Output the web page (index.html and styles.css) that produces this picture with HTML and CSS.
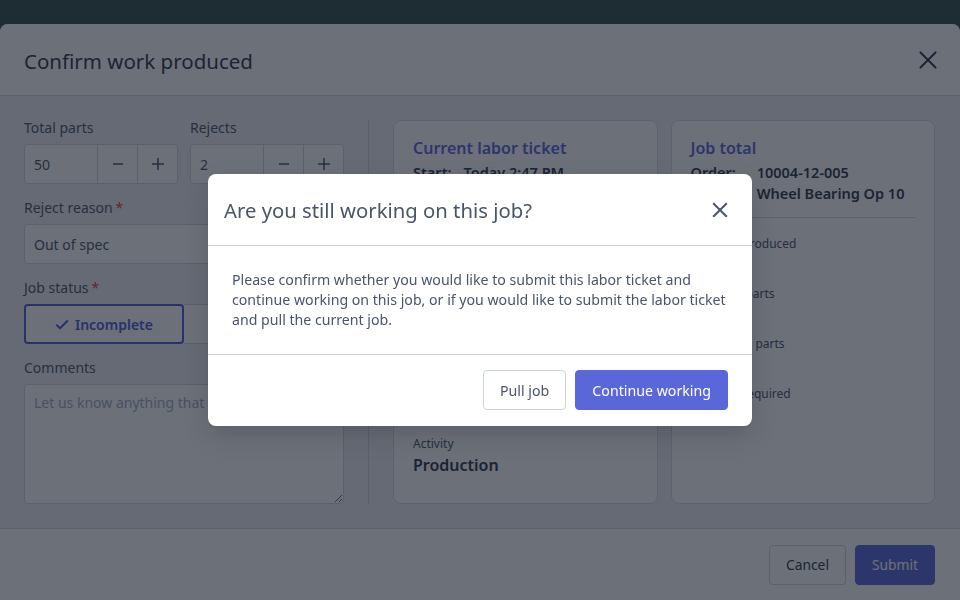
FILE: index.html
```html
<!DOCTYPE html>
<html lang="en">
<head>
<meta charset="utf-8">
<title>Confirm work produced</title>
<link rel="stylesheet" href="styles.css">
</head>
<body>
<div class="page">
  <div class="sheet">
    <div class="sheet-header">
      <h1 class="sheet-title">Confirm work produced</h1>
      <button class="icon-btn close-lg" aria-label="Close">
        <svg width="18" height="18" viewBox="0 0 18 18"><path d="M1.5 1.5L16.5 16.5M16.5 1.5L1.5 16.5" stroke="currentColor" stroke-width="2" stroke-linecap="round" fill="none"/></svg>
      </button>
    </div>
    <div class="sheet-body">
      <div class="form-col">
        <div class="row-2">
          <div class="field">
            <label class="label">Total parts</label>
            <div class="stepper">
              <input class="stepper-input" value="50">
              <button class="step-btn"><svg width="14" height="14" viewBox="0 0 14 14"><path d="M2 7H12" stroke="currentColor" stroke-width="1.5"/></svg></button>
              <button class="step-btn"><svg width="14" height="14" viewBox="0 0 14 14"><path d="M1 7H13M7 1V13" stroke="currentColor" stroke-width="1.5"/></svg></button>
            </div>
          </div>
          <div class="field">
            <label class="label">Rejects</label>
            <div class="stepper">
              <input class="stepper-input" value="2">
              <button class="step-btn"><svg width="14" height="14" viewBox="0 0 14 14"><path d="M2 7H12" stroke="currentColor" stroke-width="1.5"/></svg></button>
              <button class="step-btn"><svg width="14" height="14" viewBox="0 0 14 14"><path d="M1 7H13M7 1V13" stroke="currentColor" stroke-width="1.5"/></svg></button>
            </div>
          </div>
        </div>
        <div class="field">
          <label class="label">Reject reason<span class="req">*</span></label>
          <div class="select">
            <span>Out of spec</span>
            <svg width="14" height="14" viewBox="0 0 14 14"><path d="M3 5L7 9L11 5" stroke="currentColor" stroke-width="1.5" fill="none"/></svg>
          </div>
        </div>
        <div class="field">
          <label class="label">Job status<span class="req">*</span></label>
          <div class="toggle">
            <button class="toggle-btn active">
              <svg width="14" height="11" viewBox="0 0 14 11"><path d="M1.2 5.6L5 9.3L12.8 1.5" stroke="currentColor" stroke-width="2" fill="none"/></svg>
              Incomplete
            </button>
            <button class="toggle-btn">Complete</button>
          </div>
        </div>
        <div class="field">
          <label class="label">Comments</label>
          <textarea class="textarea" placeholder="Let us know anything that happened"></textarea>
        </div>
      </div>
      <div class="divider"></div>
      <div class="cards">
        <div class="card">
          <h2 class="card-title">Current labor ticket</h2>
          <dl class="meta meta-start">
            <dt>Start:</dt><dd>Today 2:47 PM</dd>
            <dt>End:</dt><dd>Today 4:12 PM</dd>
          </dl>
          <hr class="card-rule">
          <div class="stat"><span class="stat-label">Parts produced</span><span class="stat-value">50</span></div>
          <div class="stat"><span class="stat-label">Good parts</span><span class="stat-value">48</span></div>
          <div class="stat"><span class="stat-label">Rejected parts</span><span class="stat-value">2</span></div>
          <div class="stat"><span class="stat-label">Duration</span><span class="stat-value">1h 25m</span></div>
          <div class="stat"><span class="stat-label">Activity</span><span class="stat-value">Production</span></div>
        </div>
        <div class="card">
          <h2 class="card-title">Job total</h2>
          <dl class="meta">
            <dt>Order:</dt><dd>10004-12-005</dd>
            <dt>Router:</dt><dd>Wheel Bearing Op 10</dd>
          </dl>
          <hr class="card-rule">
          <div class="stat"><span class="stat-label">Quantity produced</span><span class="stat-value">150</span></div>
          <div class="stat"><span class="stat-label">Accepted parts</span><span class="stat-value">145</span></div>
          <div class="stat"><span class="stat-label">Completed parts</span><span class="stat-value">5</span></div>
          <div class="stat"><span class="stat-label">Quantity required</span><span class="stat-value">500</span></div>
        </div>
      </div>
    </div>
    <div class="sheet-footer">
      <button class="btn btn-secondary btn-sm">Cancel</button>
      <button class="btn btn-primary btn-sm">Submit</button>
    </div>
  </div>
</div>

<div class="overlay"></div>

<div class="dialog-layer">
  <div class="dialog" role="dialog">
    <div class="dialog-header">
      <h2 class="dialog-title">Are you still working on this job?</h2>
      <button class="icon-btn close-sm" aria-label="Close">
        <svg width="16" height="16" viewBox="0 0 16 16"><path d="M1.2 1.2L14.8 14.8M14.8 1.2L1.2 14.8" stroke="currentColor" stroke-width="2" fill="none"/></svg>
      </button>
    </div>
    <div class="dialog-body">
      <p>Please confirm whether you would like to submit this labor ticket and continue working on this job, or if you would like to submit the labor ticket and pull the current job.</p>
    </div>
    <div class="dialog-footer">
      <button class="btn btn-secondary btn-light">Pull job</button>
      <button class="btn btn-primary">Continue working</button>
    </div>
  </div>
</div>
</body>
</html>
```

FILE: styles.css
```css
* { box-sizing: border-box; }

html, body {
  margin: 0;
  padding: 0;
  width: 960px;
  height: 600px;
  overflow: hidden;
}

body {
  font-family: "Noto Sans", "Open Sans", sans-serif;
  background: #334f47;
  color: #2d3748;
}

button, input, textarea {
  font-family: inherit;
}

.page {
  padding-top: 24px;
  height: 600px;
}

.sheet {
  background: #edf0f4;
  border-radius: 8px 8px 0 0;
  height: 576px;
  display: flex;
  flex-direction: column;
  overflow: hidden;
}

.sheet-header {
  background: #ffffff;
  height: 72px;
  border-bottom: 1px solid #d2d8e0;
  display: flex;
  align-items: center;
  justify-content: space-between;
  padding: 2px 23px 0 24px;
}

.sheet-title {
  margin: 0;
  font-size: 20.5px;
  font-weight: 400;
  color: #2d3748;
}

.icon-btn {
  border: 0;
  background: transparent;
  padding: 0;
  display: flex;
  align-items: center;
  justify-content: center;
  color: #2d3748;
}

.close-lg { margin-top: -2px; }

.sheet-body {
  flex: 1;
  display: flex;
  padding: 24px 25px 24px 24px;
}

.form-col {
  width: 320px;
  display: flex;
  flex-direction: column;
  gap: 16px;
}

.row-2 {
  display: flex;
  gap: 12px;
}

.row-2 .field { flex: 1 1 0; min-width: 0; }

.field {
  display: flex;
  flex-direction: column;
}

.label {
  font-size: 14px;
  line-height: 16px;
  color: #4a5568;
  margin-bottom: 8px;
}

.req {
  color: #e53e3e;
  margin-left: 3px;
}

.stepper {
  display: flex;
  height: 40px;
  border: 1px solid #cfd6df;
  border-radius: 4px;
  background: #ffffff;
  overflow: hidden;
}

.stepper-input {
  flex: 1 1 0;
  min-width: 0;
  border: 0;
  padding: 0 0 0 9px;
  font-size: 14px;
  color: #4a5568;
  background: transparent;
}

.step-btn {
  flex: 0 0 40px;
  border: 0;
  border-left: 1px solid #cfd6df;
  background: transparent;
  color: #4a5568;
  display: flex;
  align-items: center;
  justify-content: center;
}

.select {
  height: 40px;
  border: 1px solid #cfd6df;
  border-radius: 4px;
  background: #ffffff;
  display: flex;
  align-items: center;
  justify-content: space-between;
  padding: 0 12px 0 9px;
  font-size: 14px;
  color: #4a5568;
}

.toggle {
  display: grid;
  grid-template-columns: 160px 160px;
  height: 40px;
}

.toggle-btn {
  min-width: 0;
  padding: 0;
  border: 1px solid #cfd6df;
  background: #ffffff;
  font-size: 14px;
  color: #4a5568;
  display: flex;
  align-items: center;
  justify-content: center;
  gap: 6px;
}

.toggle-btn:last-child {
  border-left: 0;
  border-radius: 0 4px 4px 0;
}

.toggle-btn.active {
  border: 2px solid #4f5bd5;
  border-radius: 4px;
  color: #4f5bd5;
  font-weight: 600;
}

.textarea {
  height: 120px;
  border: 1px solid #cfd6df;
  border-radius: 4px;
  background: #ffffff;
  padding: 8px 9px;
  font-size: 14px;
  line-height: 20px;
  color: #4a5568;
}

.textarea::placeholder { color: #a0aec0; }

.divider {
  width: 1px;
  background: #cfd6df;
  margin: 0 24px;
}

.cards {
  flex: 1;
  display: grid;
  grid-template-columns: 1fr 1fr;
  gap: 13px;
}

.card {
  background: #ffffff;
  border: 1px solid #d6dce4;
  border-radius: 8px;
  padding: 15px 19px;
  display: flex;
  flex-direction: column;
}

.card-title {
  margin: 0;
  font-size: 16px;
  line-height: 24px;
  font-weight: 600;
  color: #5a67d8;
}

.meta {
  margin: 2px 0 0;
  display: grid;
  grid-template-columns: auto 1fr;
  column-gap: 14px;
  font-size: 14.5px;
  line-height: 21px;
  font-weight: 600;
  color: #2d3748;
}

.meta-start { column-gap: 12px; }

.meta dt, .meta dd { margin: 0; }

.card-rule {
  border: 0;
  border-top: 1px solid #d6dce4;
  margin: 13px 0 17px;
  width: 100%;
}

.stat {
  display: flex;
  flex-direction: column;
  margin-bottom: 8px;
}

.stat-label {
  font-size: 12px;
  line-height: 18px;
  color: #4a5568;
}

.stat-value {
  font-size: 16px;
  line-height: 24px;
  font-weight: 600;
  color: #2d3748;
}

.sheet-footer {
  background: #ffffff;
  height: 72px;
  border-top: 1px solid #d2d8e0;
  display: flex;
  justify-content: flex-end;
  align-items: center;
  gap: 9px;
  padding: 0 25px;
}

.btn {
  height: 40px;
  border-radius: 4px;
  padding: 0 16px;
  font-size: 14.2px;
  display: flex;
  align-items: center;
}

.btn-sm { font-size: 13.8px; }

.btn-secondary {
  background: #ffffff;
  border: 1px solid #cfd6df;
  color: #2d3748;
}

.btn-primary {
  background: #5a67d8;
  border: 1px solid #5a67d8;
  color: #ffffff;
}

.overlay {
  position: fixed;
  inset: 0;
  background: rgba(17, 24, 39, 0.62);
}

.dialog-layer {
  position: fixed;
  inset: 0;
  display: flex;
  align-items: center;
  justify-content: center;
}

.dialog {
  width: 544px;
  background: #ffffff;
  border-radius: 8px;
  box-shadow: 0 10px 25px rgba(0, 0, 0, 0.15);
}

.dialog-header {
  height: 72px;
  border-bottom: 1px solid #cbd5e0;
  display: flex;
  align-items: center;
  justify-content: space-between;
  padding: 0 24px 0 16px;
}

.dialog-title {
  margin: 0;
  font-size: 20.3px;
  font-weight: 400;
  color: #4a5568;
}

.close-sm { color: #4a5568; }

.dialog-body {
  padding: 24px;
  border-bottom: 1px solid #cbd5e0;
}

.dialog-body p {
  margin: 0;
  font-size: 14.15px;
  line-height: 20px;
  color: #4a5568;
}

.dialog-footer {
  display: flex;
  justify-content: flex-end;
  gap: 9px;
  padding: 15px 24px 16px;
}

.btn-light {
  border-color: #cbd5e0;
  color: #4a5568;
}
```
